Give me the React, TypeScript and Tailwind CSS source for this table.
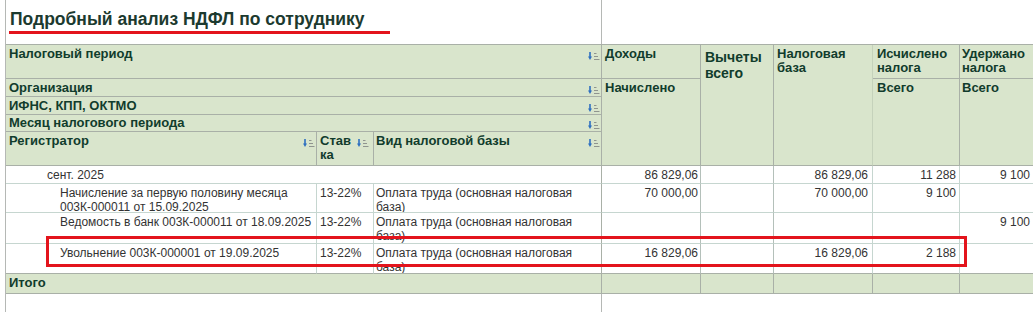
import React from "react";

const hdr =
  "border-r border-b border-[#a9b0a7] bg-[#d9e5cc] text-[13px] font-bold leading-[14px] text-[#113c2c] overflow-hidden";
const cell =
  "border-r border-b border-[#c6d6d0] text-[12px] leading-[14px] text-[#333333] overflow-hidden pt-[2px]";
const num = "text-right pr-[2px]";
const total = "border-r border-b border-[#a9b0a7] bg-[#d9e5cc]";

function SortIcon() {
  return (
    <svg width="12" height="9" viewBox="0 0 12 9" className="mt-[5px] mr-[1px] shrink-0">
      <path d="M2 0V5.5" stroke="#2d6fc0" strokeWidth="1.6" />
      <path d="M0 4.5H4L2 8Z" fill="#2d6fc0" />
      <path d="M6 1.5H8.5M6 4.5H10M6 7.5H11.5" stroke="#8f948f" strokeWidth="1" />
    </svg>
  );
}

type Row = {
  name: string;
  indent: "group" | "item";
  rate?: string;
  kind?: string;
  income?: string;
  base?: string;
  calc?: string;
  held?: string;
  last?: boolean;
};

const rows: Row[] = [
  { name: "сент. 2025", indent: "group", income: "86 829,06", base: "86 829,06", calc: "11 288", held: "9 100" },
  {
    name: "Начисление за первую половину месяца 003К-000011 от 15.09.2025",
    indent: "item",
    rate: "13-22%",
    kind: "Оплата труда (основная налоговая база)",
    income: "70 000,00",
    base: "70 000,00",
    calc: "9 100",
  },
  {
    name: "Ведомость в банк 003К-000011 от 18.09.2025",
    indent: "item",
    rate: "13-22%",
    kind: "Оплата труда (основная налоговая база)",
    held: "9 100",
  },
  {
    name: "Увольнение 003К-000001 от 19.09.2025",
    indent: "item",
    rate: "13-22%",
    kind: "Оплата труда (основная налоговая база)",
    income: "16 829,06",
    base: "16 829,06",
    calc: "2 188",
    last: true,
  },
];

export default function App() {
  return (
    <div className="relative h-[312px] w-[1033px] overflow-hidden bg-white font-['Liberation_Sans',Arial,sans-serif]">
      <div className="ml-[5px] flex h-full flex-col border-l border-[#b5b8b5]">
        {/* title */}
        <div className="h-[44px] w-[596px] shrink-0 border-r border-[#b5b8b5] pl-[4px] pt-[9px]">
          <h1 className="text-[17.5px] font-bold leading-[20px] text-[#1c3a2f]">Подробный анализ НДФЛ по сотруднику</h1>
          <div className="ml-[-1px] mt-[2px] h-[3px] w-[381px] bg-[#e3141c]" />
        </div>

        {/* report grid */}
        <div className="grid shrink-0 grid-cols-[311px_57px_228px_99px_73px_99px_87px_1fr] grid-rows-[34px_18px_18px_17px_34px_18px_29px_31px_30px_20px] border-t border-[#a9b0a7]">
          {/* header row 1 */}
          <div className={`${hdr} col-span-3 flex justify-between pl-[3px] pt-[2px]`}>
            <span>Налоговый период</span>
            <SortIcon />
          </div>
          <div className={`${hdr} pl-[3px] pt-[2px]`}>Доходы</div>
          <div className={`${hdr} row-span-5 pl-[4px] pt-[4px] text-[14px] leading-[16px]`}>Вычеты всего</div>
          <div className={`${hdr} row-span-5 border-r-[#c5d2bb] pl-[3px] pt-[2px]`}>Налоговая база</div>
          <div className={`${hdr} pl-[4px] pt-[2px]`}>Исчислено налога</div>
          <div className={`${hdr} border-r-0 pl-[2px] pt-[2px]`}>Удержано налога</div>

          {/* header row 2 */}
          <div className={`${hdr} col-span-3 flex justify-between pl-[3px] pt-[2px]`}>
            <span>Организация</span>
            <SortIcon />
          </div>
          <div className={`${hdr} row-span-4 pl-[3px] pt-[2px]`}>Начислено</div>
          <div className={`${hdr} row-span-4 pl-[4px] pt-[2px]`}>Всего</div>
          <div className={`${hdr} row-span-4 border-r-0 pl-[2px] pt-[2px]`}>Всего</div>

          {/* header rows 3-4 */}
          <div className={`${hdr} col-span-3 flex justify-between pl-[3px] pt-[2px]`}>
            <span>ИФНС, КПП, ОКТМО</span>
            <SortIcon />
          </div>
          <div className={`${hdr} col-span-3 flex justify-between pl-[3px] pt-[1px]`}>
            <span>Месяц налогового периода</span>
            <SortIcon />
          </div>

          {/* header row 5 */}
          <div className={`${hdr} flex justify-between pl-[3px] pt-[2px]`}>
            <span>Регистратор</span>
            <SortIcon />
          </div>
          <div className={`${hdr} flex justify-between pl-[3px] pt-[2px]`}>
            <span>
              Став
              <br />
              ка
            </span>
            <span className="mr-[3px]">
              <SortIcon />
            </span>
          </div>
          <div className={`${hdr} flex justify-between pl-[2px] pt-[2px]`}>
            <span>Вид налоговой базы</span>
            <SortIcon />
          </div>

          {/* body */}
          {rows.map((r) => {
            const rowLine = r.last ? "border-b-[#a9b0a7]" : "";
            return (
              <React.Fragment key={r.name}>
                {r.indent === "group" ? (
                  <div className={`${cell} ${rowLine} col-span-3 border-r-[#a9b0a7] pl-[41px]`}>{r.name}</div>
                ) : (
                  <>
                    <div className={`${cell} ${rowLine} pl-[54px] pr-[2px]`}>{r.name}</div>
                    <div className={`${cell} ${rowLine} pl-[3px]`}>{r.rate}</div>
                    <div className={`${cell} ${rowLine} border-r-[#a9b0a7] pl-[2px] pr-[6px]`}>{r.kind}</div>
                  </>
                )}
                <div className={`${cell} ${rowLine} ${num} border-r-[#b4c0ba]`}>{r.income}</div>
                <div className={`${cell} ${rowLine} border-r-[#b4c0ba]`} />
                <div className={`${cell} ${rowLine} ${num} pr-[4px]`}>{r.base}</div>
                <div className={`${cell} ${rowLine} ${num} pr-[3px]`}>{r.calc}</div>
                <div className={`${cell} ${rowLine} ${num} border-r-0 pr-[3px]`}>{r.held}</div>
              </React.Fragment>
            );
          })}

          {/* total */}
          <div className={`${total} col-span-3 pl-[3px] pt-[2px] text-[13px] font-bold leading-[14px] text-[#113c2c]`}>
            Итого
          </div>
          <div className={total} />
          <div className={total} />
          <div className={total} />
          <div className={total} />
          <div className={`${total} border-r-0`} />
        </div>

        {/* empty area below */}
        <div className="w-[596px] flex-1 border-r border-[#b5b8b5]" />
      </div>

      {/* highlighted row */}
      <div className="pointer-events-none absolute left-[46px] top-[236px] h-[31px] w-[921px] border-[3px] border-[#e3141c]" />
    </div>
  );
}
